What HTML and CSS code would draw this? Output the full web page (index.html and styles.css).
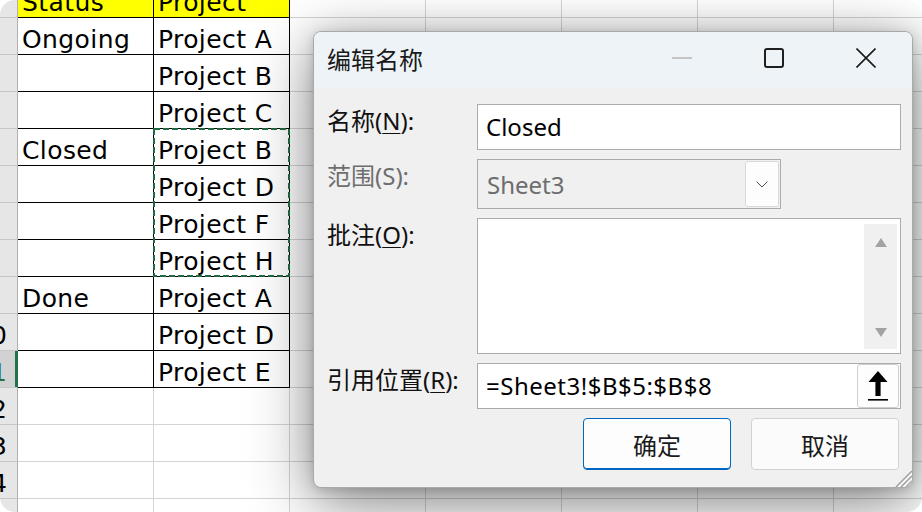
FILE: index.html
```html
<!DOCTYPE html>
<html lang="zh-CN">
<head>
<meta charset="utf-8">
<title>编辑名称</title>
<link rel="stylesheet" href="styles.css">
</head>
<body>
<div class="screen">
  <div class="sheet">
    <div class="c rh"></div><div class="c t hd">Status</div><div class="c t hd">Project</div><div class="c"></div><div class="c"></div><div class="c"></div><div class="c"></div><div class="c"></div>
    <div class="c rh"></div><div class="c t">Ongoing</div><div class="c t">Project A</div><div class="c"></div><div class="c"></div><div class="c"></div><div class="c"></div><div class="c"></div>
    <div class="c rh"></div><div class="c t"></div><div class="c t">Project B</div><div class="c"></div><div class="c"></div><div class="c"></div><div class="c"></div><div class="c"></div>
    <div class="c rh"></div><div class="c t"></div><div class="c t">Project C</div><div class="c"></div><div class="c"></div><div class="c"></div><div class="c"></div><div class="c"></div>
    <div class="c rh"></div><div class="c t">Closed</div><div class="c t">Project B</div><div class="c"></div><div class="c"></div><div class="c"></div><div class="c"></div><div class="c"></div>
    <div class="c rh"></div><div class="c t"></div><div class="c t">Project D</div><div class="c"></div><div class="c"></div><div class="c"></div><div class="c"></div><div class="c"></div>
    <div class="c rh"></div><div class="c t"></div><div class="c t">Project F</div><div class="c"></div><div class="c"></div><div class="c"></div><div class="c"></div><div class="c"></div>
    <div class="c rh"></div><div class="c t"></div><div class="c t">Project H</div><div class="c"></div><div class="c"></div><div class="c"></div><div class="c"></div><div class="c"></div>
    <div class="c rh"></div><div class="c t">Done</div><div class="c t">Project A</div><div class="c"></div><div class="c"></div><div class="c"></div><div class="c"></div><div class="c"></div>
    <div class="c rh"><span>10</span></div><div class="c t"></div><div class="c t">Project D</div><div class="c"></div><div class="c"></div><div class="c"></div><div class="c"></div><div class="c"></div>
    <div class="c rh sel"><span>11</span></div><div class="c t"></div><div class="c t">Project E</div><div class="c"></div><div class="c"></div><div class="c"></div><div class="c"></div><div class="c"></div>
    <div class="c rh"><span>12</span></div><div class="c"></div><div class="c"></div><div class="c"></div><div class="c"></div><div class="c"></div><div class="c"></div><div class="c"></div>
    <div class="c rh"><span>13</span></div><div class="c"></div><div class="c"></div><div class="c"></div><div class="c"></div><div class="c"></div><div class="c"></div><div class="c"></div>
    <div class="c rh"><span>14</span></div><div class="c"></div><div class="c"></div><div class="c"></div><div class="c"></div><div class="c"></div><div class="c"></div><div class="c"></div>
    <div class="c rh"></div><div class="c"></div><div class="c"></div><div class="c"></div><div class="c"></div><div class="c"></div><div class="c"></div><div class="c"></div>
  </div>

  <svg class="marquee" width="137" height="149" viewBox="0 0 137 149">
    <rect x="1" y="1" width="135" height="147" fill="none" stroke="#1e6b41" stroke-width="2" stroke-dasharray="6 3"/>
  </svg>

  <div class="dialog">
    <div class="titlebar">
      <div class="title">编辑名称</div>
      <div class="caps">
        <div class="cap"><span class="min"></span></div>
        <div class="cap"><span class="max"></span></div>
        <div class="cap">
          <svg width="20" height="20" viewBox="0 0 20 20"><path d="M0.5 0.5 L19.5 19.5 M19.5 0.5 L0.5 19.5" stroke="#1a1a1a" stroke-width="1.6" fill="none"/></svg>
        </div>
      </div>
    </div>
    <div class="body">
      <div class="form">
        <div class="lbl">名称(<u>N</u>):</div>
        <div class="field">Closed</div>

        <div class="lbl dis">范围(S):</div>
        <div class="field select">
          <span>Sheet3</span>
          <span class="dd"><svg width="12" height="7" viewBox="0 0 12 7"><path d="M0.5 0.5 L6 6 L11.5 0.5" stroke="#505050" stroke-width="1" fill="none"/></svg></span>
        </div>

        <div class="lbl">批注(<u>O</u>):</div>
        <div class="field textarea">
          <div class="sb">
            <svg width="12" height="9" viewBox="0 0 12 9"><path d="M6 0 L12 9 L0 9 Z" fill="#a3a3a3"/></svg>
            <svg width="12" height="9" viewBox="0 0 12 9"><path d="M0 0 L12 0 L6 9 Z" fill="#a3a3a3"/></svg>
          </div>
        </div>

        <div class="lbl">引用位置(<u>R</u>):</div>
        <div class="field ref">
          <span class="reftext">=Sheet3!$B$5:$B$8</span>
          <span class="pick">
            <svg width="20" height="30" viewBox="0 0 20 30"><path d="M10 0 L19.5 11 L12.6 11 L12.6 25 L7.4 25 L7.4 11 L0.5 11 Z" fill="#000"/><rect x="0" y="28" width="20" height="1.6" fill="#000"/></svg>
          </span>
        </div>

        <div></div>
        <div class="btns">
          <button class="btn primary">确定</button>
          <button class="btn">取消</button>
        </div>
      </div>
    </div>
    <svg class="grip" width="22" height="22" viewBox="0 0 22 22">
      <path d="M22 6 L6 22 M22 11 L11 22 M22 16 L16 22" stroke="#a0a0a0" stroke-width="1.5" fill="none"/>
      <path d="M22 8 L8 22 M22 13 L13 22 M22 18 L18 22" stroke="#ffffff" stroke-width="1" fill="none"/>
    </svg>
  </div>
</div>
</body>
</html>
```

FILE: styles.css
```css
body {
  margin: 0;
  background: #ffffff;
}

.screen {
  position: relative;
  width: 922px;
  height: 512px;
  overflow: hidden;
  border-radius: 15px;
  background: #ffffff;
  font-family: "DejaVu Sans", sans-serif;
}

/* spreadsheet */
.sheet {
  display: grid;
  grid-template-columns: 18px repeat(7, 136px);
  grid-auto-rows: 37px;
  margin-top: -19px;
}

.c {
  box-sizing: border-box;
  border-right: 1px solid #d4d4d4;
  border-bottom: 1px solid #d4d4d4;
  display: flex;
  align-items: flex-end;
  padding: 0 0 1px 4px;
  font-size: 25px;
  line-height: 26px;
  letter-spacing: 0.4px;
  white-space: nowrap;
  color: #000000;
  overflow: hidden;
}

.rh {
  background: #e6e6e6;
  border-right-color: #b0b0b0;
  border-bottom-color: #c6c6c6;
  justify-content: flex-end;
  padding: 0 10px 1px 0;
  letter-spacing: 0;
}

.rh span {
  flex: none;
}

.rh.sel {
  background: #d2d2d2;
  border-right-color: #217346;
  box-shadow: inset -2px 0 0 #217346;
  color: #217346;
}

.t {
  border-right-color: #000000;
  border-bottom-color: #000000;
}

.hd {
  background: #ffff00;
}

.marquee {
  position: absolute;
  left: 153px;
  top: 128px;
}

/* dialog */
.dialog {
  position: absolute;
  left: 313px;
  top: 31px;
  width: 600px;
  height: 457px;
  box-sizing: border-box;
  border: 1px solid #a9a9a9;
  border-radius: 8px;
  background: #f0f0f0;
  box-shadow: 0 16px 64px rgba(0, 0, 0, 0.46), 0 0 30px rgba(0, 0, 0, 0.12), 0 2px 8px rgba(0, 0, 0, 0.12);
  overflow: hidden;
  font-family: "Noto Sans", "Noto Sans CJK SC", sans-serif;
  font-size: 24px;
  color: #1a1a1a;
  display: flex;
  flex-direction: column;
}

.titlebar {
  height: 56px;
  box-sizing: border-box;
  background: #eef3f7;
  display: flex;
  align-items: center;
  padding: 0 0 4px 13px;
}

.title {
  flex: 1;
  font-size: 24px;
  color: #1a1a1a;
}

.caps {
  display: flex;
  align-self: stretch;
}

.cap {
  width: 92px;
  display: flex;
  align-items: center;
  justify-content: center;
}

.min {
  width: 20px;
  height: 2px;
  background: #c4c4c4;
}

.max {
  width: 20px;
  height: 20px;
  box-sizing: border-box;
  border: 2px solid #1f1f1f;
  border-radius: 3px;
}

.body {
  padding: 16px 11px 0 13px;
}

.form {
  display: grid;
  grid-template-columns: 150px 424px;
  grid-template-rows: 46px 50px 136px 46px 52px;
  row-gap: 9px;
}

.lbl {
  line-height: 32px;
  padding-top: 1px;
  white-space: nowrap;
  color: #111111;
}

.lbl u {
  text-decoration-thickness: 1px;
  text-underline-offset: 3px;
}

.lbl.dis {
  color: #6e6e6e;
}

.field {
  box-sizing: border-box;
  border: 1px solid #ababab;
  background: #ffffff;
  display: flex;
  align-items: center;
  padding: 0 0 2px 8px;
  color: #000000;
  white-space: nowrap;
}

.select {
  width: 304px;
  background: #f0f0f0;
  color: #6d6d6d;
  padding: 1px 1px 1px 9px;
  justify-content: space-between;
}

.dd {
  width: 34px;
  height: 100%;
  box-sizing: border-box;
  border: 1px solid #d9d9d9;
  border-radius: 2px;
  background: #fdfdfd;
  display: flex;
  align-items: center;
  justify-content: center;
}

.textarea {
  padding: 5px 3px 4px 0;
  justify-content: flex-end;
  align-items: stretch;
}

.sb {
  width: 33px;
  box-sizing: border-box;
  background: #f0f0f0;
  display: flex;
  flex-direction: column;
  justify-content: space-between;
  align-items: center;
  padding: 14px 0 12px;
}

.ref {
  padding: 0 1px 0 8px;
  justify-content: space-between;
}

.reftext {
  letter-spacing: 0.5px;
  padding-bottom: 2px;
}

.pick {
  width: 42px;
  height: 44px;
  box-sizing: border-box;
  border: 1px solid #cfcfcf;
  border-radius: 3px;
  background: #fdfdfd;
  display: flex;
  align-items: center;
  justify-content: center;
}

.btns {
  grid-column: 2;
  display: flex;
  justify-content: flex-end;
  gap: 20px;
  padding-right: 2px;
}

.btn {
  width: 148px;
  height: 52px;
  box-sizing: border-box;
  border: 1px solid #d2d2d2;
  border-radius: 4px;
  background: #fbfbfb;
  font-family: "Noto Sans", "Noto Sans CJK SC", sans-serif;
  font-size: 24px;
  color: #1a1a1a;
  padding: 0;
}

.btn.primary {
  border-color: #0067c0;
  background: #fdfdfd;
  box-shadow: inset 0 -1px 0 #0067c0;
}

.grip {
  position: absolute;
  right: 0;
  bottom: 0;
}
```
